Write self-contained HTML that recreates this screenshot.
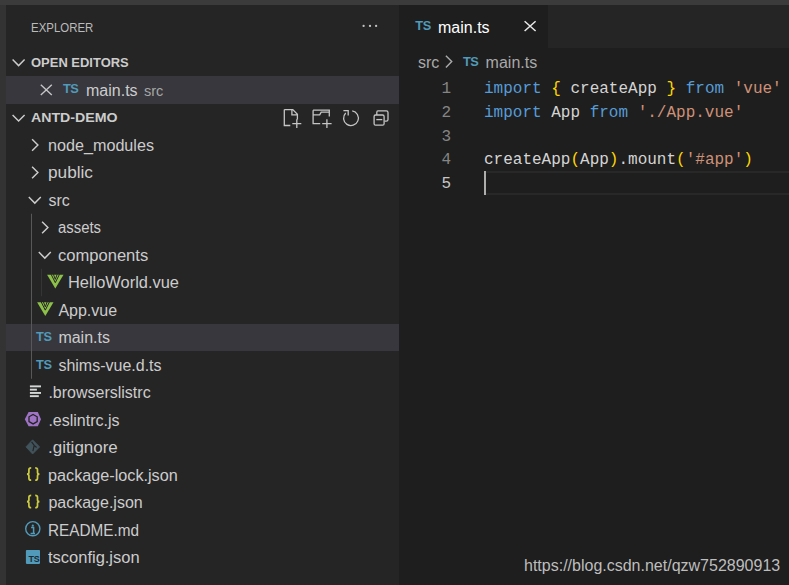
<!DOCTYPE html>
<html><head><meta charset="utf-8">
<style>
*{margin:0;padding:0;box-sizing:border-box}
html,body{width:789px;height:585px;overflow:hidden;background:#1e1e1e}
.bg{position:absolute}
.tx{position:absolute;line-height:20px;white-space:pre}
svg{position:absolute;left:0;top:0}
</style></head><body>
<div class="bg" style="left:0;top:0;width:789px;height:5px;background:#3b3b3b"></div>
<div class="bg" style="left:0;top:5px;width:6px;height:580px;background:#333333"></div>
<div class="bg" style="left:6px;top:5px;width:393px;height:580px;background:#252526"></div>
<div class="bg" style="left:6px;top:76.25px;width:393px;height:27.5px;background:#37373d"></div>
<div class="bg" style="left:6px;top:323.75px;width:393px;height:27.5px;background:#37373d"></div>
<div class="bg" style="left:399px;top:5px;width:390px;height:43px;background:#252526"></div>
<div class="bg" style="left:399px;top:5px;width:149px;height:43px;background:#1e1e1e"></div>
<div class="bg" style="left:484px;top:170.75px;width:305px;height:23.75px;border:2px solid #282828;border-right:none"></div>
<div class="bg" style="left:484px;top:171.15px;width:2px;height:23.6px;background:#aeafad"></div>
<svg width="789" height="585" viewBox="0 0 789 585">
<circle cx="363.6" cy="25.9" r="1.15" fill="#c5c5c5"/>
<circle cx="370" cy="25.9" r="1.15" fill="#c5c5c5"/>
<circle cx="376.1" cy="25.9" r="1.15" fill="#c5c5c5"/>
<polyline points="12.600000000000001,59.6 18.6,65.60000000000001 24.6,59.6" fill="none" stroke="#cccccc" stroke-width="1.45"/>
<path d="M40.8 84.8L51.8 95.0M51.8 84.8L40.8 95.0" stroke="#c5c5c5" stroke-width="1.4" fill="none"/>
<polyline points="12.600000000000001,115.0 18.6,121.0 24.6,115.0" fill="none" stroke="#cccccc" stroke-width="1.45"/>
<path d="M284.3 109.6H292.8L297.4 114.2V119.5M291.9 109.6V114.8H297.4M284.3 109.6V125.5H290.3M292.3 123.7H301.3M296.8 119.2V128" fill="none" stroke="#c5c5c5" stroke-width="1.3"/>
<path d="M313.1 110.2H329.3V116.5M313.1 110.2V123.6H320.2M313.1 114.9H319.7L321.2 112.2H329.3M322.2 123.7H331.6M326.9 119.2V128" fill="none" stroke="#c5c5c5" stroke-width="1.3"/>
<path d="M345.7 113.0A7.4 7.4 0 1 0 352.2 110.9" fill="none" stroke="#c5c5c5" stroke-width="1.3"/><path d="M343.4 110.7H348.2V115.5" fill="none" stroke="#c5c5c5" stroke-width="1.3"/>
<rect x="374.1" y="115.0" width="10.0" height="10.2" rx="1.5" fill="none" stroke="#c5c5c5" stroke-width="1.3"/><path d="M377.9 110.8H386.3Q388 110.8 388 112.5V119.6Q388 121.2 386.3 121.2H384.6M377.9 110.8Q376.8 110.8 376.8 112.5V115" fill="none" stroke="#c5c5c5" stroke-width="1.3"/><path d="M376.3 119.6H382.3" stroke="#c5c5c5" stroke-width="1.3"/>
<polyline points="32.1,139.2 37.9,145.0 32.1,150.8" fill="none" stroke="#cccccc" stroke-width="1.45"/>
<polyline points="32.1,166.7 37.9,172.5 32.1,178.3" fill="none" stroke="#cccccc" stroke-width="1.45"/>
<polyline points="28.799999999999997,197.1 34.8,203.1 40.8,197.1" fill="none" stroke="#cccccc" stroke-width="1.45"/>
<polyline points="42.1,221.7 47.9,227.5 42.1,233.3" fill="none" stroke="#cccccc" stroke-width="1.45"/>
<polyline points="38.8,252.1 44.8,258.09999999999997 50.8,252.1" fill="none" stroke="#cccccc" stroke-width="1.45"/>
<g transform="translate(47.10000000000001,274.75)"><polygon points="0,0 16.4,0 8.2,13.7" fill="#8dc149"/><polyline points="4.0,-0.5 8.2,7.9 12.399999999999999,-0.5" fill="none" stroke="#252526" stroke-width="1.0"/><polyline points="6.3,-0.5 8.2,4.6 10.099999999999998,-0.5" fill="none" stroke="#252526" stroke-width="1.0"/></g>
<g transform="translate(37.099999999999994,302.25)"><polygon points="0,0 16.4,0 8.2,13.7" fill="#8dc149"/><polyline points="4.0,-0.5 8.2,7.9 12.399999999999999,-0.5" fill="none" stroke="#252526" stroke-width="1.0"/><polyline points="6.3,-0.5 8.2,4.6 10.099999999999998,-0.5" fill="none" stroke="#252526" stroke-width="1.0"/></g>
<line x1="29.9" y1="386.35" x2="41" y2="386.35" stroke="#d4d7d6" stroke-width="1.9"/>
<line x1="29.9" y1="389.65000000000003" x2="36.9" y2="389.65000000000003" stroke="#d4d7d6" stroke-width="1.9"/>
<line x1="29.9" y1="392.95000000000005" x2="41" y2="392.95000000000005" stroke="#d4d7d6" stroke-width="1.9"/>
<line x1="29.9" y1="396.15000000000003" x2="38.8" y2="396.15000000000003" stroke="#d4d7d6" stroke-width="1.9"/>
<polygon points="24.8,419.2 28.6,412.1 37.8,412.1 41,419.2 37.8,426.3 28.6,426.3" fill="#a074c4"/>
<polygon points="33.1,414.5 37.2,416.8 37.2,421.6 33.1,423.90000000000003 29,421.6 29,416.8" fill="none" stroke="#232325" stroke-width="1.3"/>
<polygon points="25.9,446.9 32.6,439.8 39.7,446.9 32.6,454.0" fill="#41535b" stroke="#41535b" stroke-width="0.8" stroke-linejoin="round"/>
<path d="M31.6 441.85L34.2 445.35L36.6 447.45M34.2 445.35L32.9 451.05" fill="none" stroke="#252526" stroke-width="1.2"/>
<path d="M31.2 467.85Q28.9 467.85 28.9 469.85V472.45Q28.9 473.95 27.0 474.05Q28.9 474.15 28.9 475.65V478.25Q28.9 480.25 31.2 480.25" fill="none" stroke="#cbcb41" stroke-width="1.7"/>
<path d="M35.2 467.85Q37.5 467.85 37.5 469.85V472.45Q37.5 473.95 39.4 474.05Q37.5 474.15 37.5 475.65V478.25Q37.5 480.25 35.2 480.25" fill="none" stroke="#cbcb41" stroke-width="1.7"/>
<path d="M31.2 495.35Q28.9 495.35 28.9 497.35V499.95Q28.9 501.45 27.0 501.55Q28.9 501.65 28.9 503.15V505.75Q28.9 507.75 31.2 507.75" fill="none" stroke="#cbcb41" stroke-width="1.7"/>
<path d="M35.2 495.35Q37.5 495.35 37.5 497.35V499.95Q37.5 501.45 39.4 501.55Q37.5 501.65 37.5 503.15V505.75Q37.5 507.75 35.2 507.75" fill="none" stroke="#cbcb41" stroke-width="1.7"/>
<circle cx="32.8" cy="528.7" r="7.1" fill="none" stroke="#519aba" stroke-width="1.4"/>
<circle cx="32.8" cy="525.65" r="1.1" fill="#519aba"/>
<path d="M31.1 527.55H33.6V533.55M30.6 533.55H35" fill="none" stroke="#519aba" stroke-width="1.5"/>
<rect x="25.9" y="550.1" width="14.1" height="13.8" rx="0.8" fill="#519aba"/>
<line x1="31.5" y1="213.75" x2="31.5" y2="378.75" stroke="#585858" stroke-width="1"/>
<line x1="41.5" y1="268.75" x2="41.5" y2="296.25" stroke="#353535" stroke-width="1"/>
<path d="M524.6 21.2L535.6 31.0M535.6 21.2L524.6 31.0" stroke="#e8e8e8" stroke-width="1.5" fill="none"/>
<polyline points="445.90000000000003,55.800000000000004 451.7,61.6 445.90000000000003,67.4" fill="none" stroke="#a9a9a9" stroke-width="1.45"/>
</svg>
<div class="tx" style="left:30.5px;top:17.7px;font-family:'Liberation Sans',sans-serif;font-weight:normal;font-size:13px;color:#bbbbbb;"><span style="display:inline-block;transform:scaleX(0.88);transform-origin:0 0">EXPLORER</span></div>
<div class="tx" style="left:30.6px;top:53.099999999999994px;font-family:'Liberation Sans',sans-serif;font-weight:bold;font-size:13.3px;color:#cccccc;"><span style="display:inline-block;transform:scaleX(0.975);transform-origin:0 0">OPEN EDITORS</span></div>
<div class="tx" style="left:62.900000000000006px;top:79.0px;font-family:'Liberation Sans',sans-serif;font-weight:bold;font-size:12.8px;color:#519aba;letter-spacing:-0.4px">TS</div>
<div class="tx" style="left:86px;top:80.8px;font-family:'Liberation Sans',sans-serif;font-weight:normal;font-size:16px;color:#cccccc;">main.ts</div>
<div class="tx" style="left:143.9px;top:80.8px;font-family:'Liberation Sans',sans-serif;font-weight:normal;font-size:14.5px;color:#a6a6a6;">src</div>
<div class="tx" style="left:30.6px;top:108.0px;font-family:'Liberation Sans',sans-serif;font-weight:bold;font-size:13.3px;color:#cccccc;"><span style="display:inline-block;transform:scaleX(1.065);transform-origin:0 0">ANTD-DEMO</span></div>
<div class="tx" style="left:48.4px;top:135.85px;font-family:'Liberation Sans',sans-serif;font-weight:normal;font-size:16px;color:#cccccc;"><span style="display:inline-block;transform:scaleX(1.01);transform-origin:0 0">node_modules</span></div>
<div class="tx" style="left:48.4px;top:163.35px;font-family:'Liberation Sans',sans-serif;font-weight:normal;font-size:16px;color:#cccccc;"><span style="display:inline-block;transform:scaleX(1.075);transform-origin:0 0">public</span></div>
<div class="tx" style="left:48.4px;top:190.85px;font-family:'Liberation Sans',sans-serif;font-weight:normal;font-size:16px;color:#cccccc;">src</div>
<div class="tx" style="left:58.4px;top:218.35px;font-family:'Liberation Sans',sans-serif;font-weight:normal;font-size:16px;color:#cccccc;"><span style="display:inline-block;transform:scaleX(0.93);transform-origin:0 0">assets</span></div>
<div class="tx" style="left:58.4px;top:245.85000000000002px;font-family:'Liberation Sans',sans-serif;font-weight:normal;font-size:16px;color:#cccccc;"><span style="display:inline-block;transform:scaleX(1.035);transform-origin:0 0">components</span></div>
<div class="tx" style="left:68.4px;top:273.35px;font-family:'Liberation Sans',sans-serif;font-weight:normal;font-size:16px;color:#cccccc;"><span style="display:inline-block;transform:scaleX(1.025);transform-origin:0 0">HelloWorld.vue</span></div>
<div class="tx" style="left:58.4px;top:300.85px;font-family:'Liberation Sans',sans-serif;font-weight:normal;font-size:16px;color:#cccccc;">App.vue</div>
<div class="tx" style="left:36.1px;top:327.15000000000003px;font-family:'Liberation Sans',sans-serif;font-weight:bold;font-size:12.8px;color:#519aba;letter-spacing:-0.4px">TS</div>
<div class="tx" style="left:58.4px;top:328.35px;font-family:'Liberation Sans',sans-serif;font-weight:normal;font-size:16px;color:#cccccc;">main.ts</div>
<div class="tx" style="left:36.1px;top:354.65000000000003px;font-family:'Liberation Sans',sans-serif;font-weight:bold;font-size:12.8px;color:#519aba;letter-spacing:-0.4px">TS</div>
<div class="tx" style="left:58.4px;top:355.85px;font-family:'Liberation Sans',sans-serif;font-weight:normal;font-size:16px;color:#cccccc;">shims-vue.d.ts</div>
<div class="tx" style="left:48.4px;top:383.35px;font-family:'Liberation Sans',sans-serif;font-weight:normal;font-size:16px;color:#cccccc;">.browserslistrc</div>
<div class="tx" style="left:48.4px;top:410.85px;font-family:'Liberation Sans',sans-serif;font-weight:normal;font-size:16px;color:#cccccc;">.eslintrc.js</div>
<div class="tx" style="left:48.4px;top:438.35px;font-family:'Liberation Sans',sans-serif;font-weight:normal;font-size:16px;color:#cccccc;"><span style="display:inline-block;transform:scaleX(1.06);transform-origin:0 0">.gitignore</span></div>
<div class="tx" style="left:48.4px;top:465.85px;font-family:'Liberation Sans',sans-serif;font-weight:normal;font-size:16px;color:#cccccc;"><span style="display:inline-block;transform:scaleX(1.013);transform-origin:0 0">package-lock.json</span></div>
<div class="tx" style="left:48.4px;top:493.35px;font-family:'Liberation Sans',sans-serif;font-weight:normal;font-size:16px;color:#cccccc;">package.json</div>
<div class="tx" style="left:48.4px;top:520.85px;font-family:'Liberation Sans',sans-serif;font-weight:normal;font-size:16px;color:#cccccc;"><span style="display:inline-block;transform:scaleX(0.957);transform-origin:0 0">README.md</span></div>
<div class="tx" style="left:48.4px;top:548.35px;font-family:'Liberation Sans',sans-serif;font-weight:normal;font-size:16px;color:#cccccc;"><span style="display:inline-block;transform:scaleX(1.03);transform-origin:0 0">tsconfig.json</span></div>
<div class="tx" style="left:28.6px;top:555.45px;font:bold 8.9px/1 'Liberation Sans',sans-serif;color:#1b2a33;letter-spacing:-0.2px">TS</div>
<div class="tx" style="left:415.3px;top:16.400000000000002px;font-family:'Liberation Sans',sans-serif;font-weight:bold;font-size:12.8px;color:#519aba;letter-spacing:-0.4px">TS</div>
<div class="tx" style="left:438px;top:17.799999999999997px;font-family:'Liberation Sans',sans-serif;font-weight:normal;font-size:16px;color:#ffffff;">main.ts</div>
<div class="tx" style="left:417.9px;top:52.5px;font-family:'Liberation Sans',sans-serif;font-weight:normal;font-size:16px;color:#a9a9a9;">src</div>
<div class="tx" style="left:462.9px;top:52.2px;font-family:'Liberation Sans',sans-serif;font-weight:bold;font-size:12.8px;color:#519aba;letter-spacing:-0.4px">TS</div>
<div class="tx" style="left:485.6px;top:52.5px;font-family:'Liberation Sans',sans-serif;font-weight:normal;font-size:16px;color:#a9a9a9;">main.ts</div>
<div class="tx" style="left:441.5px;top:79.1px;font-family:'Liberation Mono',monospace;font-weight:normal;font-size:16px;color:#858585;">1</div>
<div class="tx" style="left:441.5px;top:102.85px;font-family:'Liberation Mono',monospace;font-weight:normal;font-size:16px;color:#858585;">2</div>
<div class="tx" style="left:441.5px;top:126.6px;font-family:'Liberation Mono',monospace;font-weight:normal;font-size:16px;color:#858585;">3</div>
<div class="tx" style="left:441.5px;top:150.35px;font-family:'Liberation Mono',monospace;font-weight:normal;font-size:16px;color:#858585;">4</div>
<div class="tx" style="left:441.5px;top:174.1px;font-family:'Liberation Mono',monospace;font-weight:normal;font-size:16px;color:#c6c6c6;">5</div>
<div class="tx" style="left:484px;top:79.1px;font-family:'Liberation Mono',monospace;font-weight:normal;font-size:16px;color:#d4d4d4;white-space:pre"><span style="color:#569cd6">import</span> <span style="color:#ffd700">{</span> <span style="color:#d4d4d4">createApp</span> <span style="color:#ffd700">}</span> <span style="color:#569cd6">from</span> <span style="color:#ce9178">'vue'</span></div>
<div class="tx" style="left:484px;top:102.85px;font-family:'Liberation Mono',monospace;font-weight:normal;font-size:16px;color:#d4d4d4;white-space:pre"><span style="color:#569cd6">import</span> <span style="color:#d4d4d4">App</span> <span style="color:#569cd6">from</span> <span style="color:#ce9178">'./App.vue'</span></div>
<div class="tx" style="left:484px;top:150.35px;font-family:'Liberation Mono',monospace;font-weight:normal;font-size:16px;color:#d4d4d4;white-space:pre"><span style="color:#d4d4d4">createApp</span><span style="color:#ffd700">(</span><span style="color:#d4d4d4">App</span><span style="color:#ffd700">)</span><span style="color:#d4d4d4">.mount</span><span style="color:#ffd700">(</span><span style="color:#ce9178">'#app'</span><span style="color:#ffd700">)</span></div>
<div class="tx" style="left:524px;top:556.0px;font-family:'Liberation Sans',sans-serif;font-size:16px;color:#bdbdbd">https://blog.csdn.net/qzw752890913</div>
</body></html>
